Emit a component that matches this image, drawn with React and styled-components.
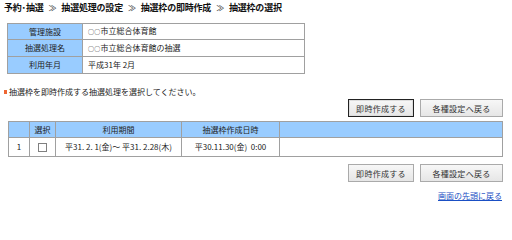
import React from "react";
import styled, { createGlobalStyle } from "styled-components";

const Global = createGlobalStyle`
  html, body { margin: 0; padding: 0; background: #fff; }
  body { font-family: "Noto Sans CJK JP", "Noto Sans", sans-serif; color: #222; }
`;

const Page = styled.div`
  width: 512px;
  height: 206px;
  padding: 3px 9px 0 7px;
  box-sizing: border-box;
  display: flex;
  flex-direction: column;
`;

const Breadcrumb = styled.div`
  font-size: 9px;
  line-height: 10px;
  font-weight: bold;
  color: #111;
  margin-left: -3px;
  white-space: nowrap;
  display: flex;
  gap: 5px;
  letter-spacing: -0.2px;
`;

const Sep = styled.span`
  color: #333;
  font-weight: normal;
  font-size: 8px;
`;

const Small = styled.span`
  font-size: 6px;
  letter-spacing: 0.3px;
`;

const InfoTable = styled.table`
  margin-top: 10px;
  width: 298px;
  border-collapse: collapse;
  font-size: 8px;
`;

const Th = styled.th`
  background: #9cf;
  border: 1px solid #a0a0a0;
  font-weight: normal;
  color: #222;
  height: 15px;
  padding: 0;
  text-align: ${(p) => p.$align || "center"};
  width: ${(p) => p.$w || "auto"};
  line-height: 10px;
`;

const Td = styled.td`
  border: 1px solid #a0a0a0;
  height: ${(p) => p.$h || "15px"};
  padding: 0 0 0 ${(p) => p.$pl || "5px"};
  text-align: ${(p) => p.$align || "left"};
  color: #222;
  line-height: 10px;
  white-space: nowrap;
`;

const Message = styled.div`
  margin-top: 13px;
  margin-left: -3px;
  font-size: 8px;
  line-height: 10px;
  display: flex;
  align-items: center;
`;

const Bullet = styled.span`
  width: 3px;
  height: 4px;
  background: #ee6633;
  margin-right: 2px;
`;

const ButtonRow = styled.div`
  display: flex;
  justify-content: flex-end;
  gap: 6px;
  margin-top: ${(p) => p.$mt || "0"};
`;

const Button = styled.button`
  font-family: inherit;
  font-size: 8px;
  color: #333;
  height: 18px;
  width: ${(p) => p.$w};
  padding: 0;
  background: linear-gradient(#f7f7f7, #e6e6e6);
  border: 1px solid ${(p) => (p.$active ? "#222" : "#aaa")};
  box-shadow: ${(p) => (p.$active ? "inset 0 0 0 1px #ddd" : "none")};
  border-radius: 0;
  letter-spacing: 0.3px;
`;

const ListTable = styled.table`
  margin-top: 4px;
  margin-left: 1px;
  width: 495px;
  border-collapse: collapse;
  font-size: 8px;
`;

const Checkbox = styled.span`
  display: inline-block;
  width: 7px;
  height: 7px;
  border: 1px solid #808080;
  background: #fff;
  vertical-align: middle;
`;

const TopLink = styled.a`
  align-self: flex-end;
  margin-top: 9px;
  margin-right: 1px;
  font-size: 8px;
  line-height: 10px;
  color: #1a4fc4;
  text-decoration: underline;
`;

export default function App() {
  return (
    <Page>
      <Global />
      <Breadcrumb>
        <span>予約･抽選</span>
        <Sep>≫</Sep>
        <span>抽選処理の設定</span>
        <Sep>≫</Sep>
        <span>抽選枠の即時作成</span>
        <Sep>≫</Sep>
        <span>抽選枠の選択</span>
      </Breadcrumb>

      <InfoTable>
        <tbody>
          <tr>
            <Th $w="74px">管理施設</Th>
            <Td><Small>○○</Small>市立総合体育館</Td>
          </tr>
          <tr>
            <Th>抽選処理名</Th>
            <Td $h="16px"><Small>○○</Small>市立総合体育館の抽選</Td>
          </tr>
          <tr>
            <Th>利用年月</Th>
            <Td $h="16px">平成31年 2月</Td>
          </tr>
        </tbody>
      </InfoTable>

      <Message>
        <Bullet />
        抽選枠を即時作成する抽選処理を選択してください。
      </Message>

      <ButtonRow $mt="2px">
        <Button $w="66px" $active>即時作成する</Button>
        <Button $w="83px">各種設定へ戻る</Button>
      </ButtonRow>

      <ListTable>
        <thead>
          <tr>
            <Th $w="20px"></Th>
            <Th $w="25px">選択</Th>
            <Th $w="125px">利用期間</Th>
            <Th $w="97px">抽選枠作成日時</Th>
            <Th></Th>
          </tr>
        </thead>
        <tbody>
          <tr>
            <Td $align="center" $pl="0" $h="18px">1</Td>
            <Td $align="center" $pl="0" $h="18px"><Checkbox /></Td>
            <Td $align="center" $pl="0" $h="18px">平31. 2. 1(金)～ 平31. 2.28(木)</Td>
            <Td $align="center" $pl="0" $h="18px">平30.11.30(金)&nbsp;&nbsp;0:00</Td>
            <Td $h="18px"></Td>
          </tr>
        </tbody>
      </ListTable>

      <ButtonRow $mt="7px">
        <Button $w="66px">即時作成する</Button>
        <Button $w="83px">各種設定へ戻る</Button>
      </ButtonRow>

      <TopLink href="#">画面の先頭に戻る</TopLink>
    </Page>
  );
}
